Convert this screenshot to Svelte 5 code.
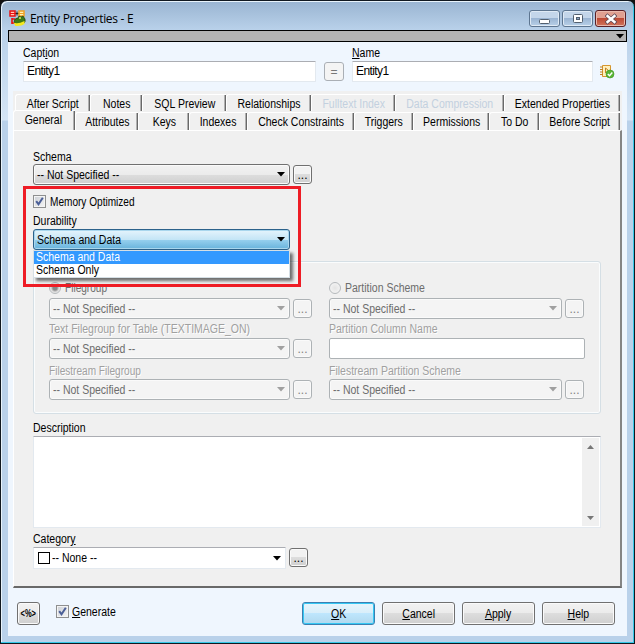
<script>
  let tabRows = $state([
    [
      { label: 'After Script', width: 75 },
      { label: 'Notes', width: 52 },
      { label: 'SQL Preview', width: 84 },
      { label: 'Relationships', width: 85 },
      { label: 'Fulltext Index', width: 84, disabled: true },
      { label: 'Data Compression', width: 109, disabled: true },
      { label: 'Extended Properties', width: 116 }
    ],
    [
      { label: 'General', width: 62, active: true },
      { label: 'Attributes', width: 63 },
      { label: 'Keys', width: 51 },
      { label: 'Indexes', width: 58 },
      { label: 'Check Constraints', width: 107 },
      { label: 'Triggers', width: 59 },
      { label: 'Permissions', width: 76 },
      { label: 'To Do', width: 50 },
      { label: 'Before Script', width: 81 }
    ]
  ]);

  let caption = $state('Entity1');
  let name = $state('Entity1');
  let durability = $state('Schema and Data');
  let memoryOptimized = $state(true);
  let generate = $state(true);

  const durabilityOptions = ['Schema and Data', 'Schema Only'];
  const actions = ['OK', 'Cancel', 'Apply', 'Help'];
</script>

{#snippet arrow()}
  <svg class="arrow" width="8" height="5" viewBox="0 0 8 5"><path d="M0 0h8L4 4.5z" fill="currentColor" /></svg>
{/snippet}

{#snippet combo(text, disabled)}
  <div class="line">
    <button class="combo" class:disabled><span class="t">{text}</span>{@render arrow()}</button>
    <button class="dots" class:disabled>...</button>
  </div>
{/snippet}

{#snippet checkbox(checked, toggle)}
  <button class="check" onclick={toggle} aria-label="toggle">
    {#if checked}
      <svg width="9" height="9" viewBox="0 0 9 9"><path d="M1.2 4.2l2.3 3L7.8.8" fill="none" stroke="#4b5f97" stroke-width="2" /></svg>
    {/if}
  </button>
{/snippet}

<div class="window">
  <header>
    <svg class="logo" width="17" height="17" viewBox="0 0 17 17">
      <path d="M6 3.500h4M8 1.500v4" stroke="#222" />
      <rect x="1" y="1" width="5" height="5" fill="#ffc8b8" stroke="#e81010" stroke-width="1.500" />
      <path d="M1 3.500h5" stroke="#e81010" />
      <rect x="10" y="1" width="5" height="5" fill="#fff2b8" stroke="#f0a020" stroke-width="1.500" />
      <path d="M10 3.500h5" stroke="#f0a020" />
      <path d="M3 8v6M3 9h3M3 13h3" fill="none" stroke="#e81010" stroke-width="1.600" />
      <path d="M5 11q1-3 4-3l1-2 2 1 2-1 2 3q1 3-2 5H6z" fill="#3c7a18" stroke="#1f3a08" stroke-width=".7" />
      <path d="M4.500 12.500q4 2 11-1.500v3q-3 2.500-9 2z" fill="#f4e820" />
      <circle cx="11" cy="8" r="1" fill="#d8f060" />
    </svg>
    <h1>Entity Properties - E</h1>
    <div class="controls">
      <button class="control" aria-label="Minimize">
        <svg width="12" height="12"><rect x=".5" y="6.500" width="10" height="4" rx="1" fill="#fff" stroke="#53606f" /></svg>
      </button>
      <button class="control" aria-label="Maximize">
        <svg width="12" height="12"><rect x="1.500" y="1.500" width="9" height="8" rx="1" fill="#fff" stroke="#53606f" /><rect x="4.500" y="4.500" width="3" height="2" fill="#8ba4c4" stroke="#53606f" /></svg>
      </button>
      <button class="control close" aria-label="Close">
        <svg width="12" height="12"><path d="M2.500 3l7 6M9.500 3l-7 6" stroke="#5f4a56" stroke-width="4" stroke-linecap="square" /><path d="M2.500 3l7 6M9.500 3l-7 6" stroke="#fff" stroke-width="2.400" stroke-linecap="square" /></svg>
      </button>
    </div>
  </header>

  <main>
    <div class="bar">{@render arrow()}</div>

    <div class="names">
      <label class="caption"><span class="t">Capt<u>i</u>on</span><input bind:value={caption} /></label>
      <button class="same">=</button>
      <label class="name"><span class="t"><u>N</u>ame</span><input bind:value={name} /></label>
      <svg class="note" width="15" height="15" viewBox="0 0 15 15">
        <path d="M2.500 1.500h8v11h-8z" fill="#fff0bd" stroke="#d6962f" />
        <path d="M0 3h3M0 5.500h3M0 8h3M0 10.500h3M5.500 9V4l3 2.500" fill="none" stroke="#c28223" />
        <circle cx="10" cy="10" r="4" fill="#5ab535" stroke="#3c9420" stroke-width=".6" />
        <path d="M7.800 10l1.700 1.700L12.300 8.500" fill="none" stroke="#fff" stroke-width="1.400" />
      </svg>
    </div>

    <div class="tabs">
      {#each tabRows as row, i}
        <nav class:second={i === 1}>
          {#each row as tab}
            <button
              class="tab"
              class:active={tab.active}
              class:off={tab.disabled}
              style="width: {tab.width}px"
            ><span class="t">{tab.label}</span></button>
          {/each}
        </nav>
      {/each}

      <section class="panel">
        <div class="label"><span class="t">Schema</span></div>
        <div class="schema">{@render combo('-- Not Specified --', false)}</div>

        <div class="memory">
          {@render checkbox(memoryOptimized, () => (memoryOptimized = !memoryOptimized))}
          <span class="t tight">Memory Optimized</span>
        </div>
        <div class="label durability"><span class="t">Durability</span></div>
        <div class="select">
          <button class="combo open"><span class="t">{durability}</span>{@render arrow()}</button>
          <ul>
            {#each durabilityOptions as option}
              <li class:selected={option === durability}>
                <button onclick={() => (durability = option)}><span class="t">{option}</span></button>
              </li>
            {/each}
          </ul>
          <div class="highlight"></div>
        </div>

        <div class="group">
          <div class="storage left">
            <div class="radio"><i class="on"></i><span class="t tight">Filegroup</span></div>
            {@render combo('-- Not Specified --', true)}
            <div class="label dim"><span class="t">Text Filegroup for Table (TEXTIMAGE_ON)</span></div>
            {@render combo('-- Not Specified --', true)}
            <div class="label dim last"><span class="t tight">Filestream Filegroup</span></div>
            {@render combo('-- Not Specified --', true)}
          </div>
          <div class="storage right">
            <div class="radio"><i></i><span class="t">Partition Scheme</span></div>
            {@render combo('-- Not Specified --', true)}
            <div class="label dim"><span class="t">Partition Column Name</span></div>
            <input class="column" disabled />
            <div class="label dim last"><span class="t">Filestream Partition Scheme</span></div>
            {@render combo('-- Not Specified --', true)}
          </div>
        </div>

        <div class="label description"><span class="t">Description</span></div>
        <div class="memo">
          <div class="scroll">
            <svg width="7" height="4"><path d="M0 4h7L3.500 0z" fill="#777" /></svg>
            <svg width="7" height="4"><path d="M0 0h7L3.500 4z" fill="#777" /></svg>
          </div>
        </div>

        <div class="label category"><span class="t">Categor<u>y</u></span></div>
        <div class="line">
          <button class="combo flat"><i class="swatch"></i><span class="t">-- None --</span>{@render arrow()}</button>
          <button class="dots">...</button>
        </div>
      </section>
    </div>

    <footer>
      <button class="code"><span class="t">&lt;%&gt;</span></button>
      <div class="generate">
        {@render checkbox(generate, () => (generate = !generate))}
        <span class="t"><u>G</u>enerate</span>
      </div>
      <div class="actions">
        {#each actions as action}
          <button class="action" class:primary={action === 'OK'}>
            <span class="t"><u>{action[0]}</u>{action.slice(1)}</span>
          </button>
        {/each}
      </div>
    </footer>
  </main>
</div>

<style>
  :global(body) {
    margin: 0;
    background: #111;
  }

  * {
    box-sizing: border-box;
  }

  .window {
    width: 635px;
    height: 644px;
    padding: 0 7px;
    border: 1px solid #101820;
    border-radius: 7px 7px 0 0;
    background: linear-gradient(#99b4d1, #b9d1ea 29px, #d5e5f5 119px, #b9d1ea 120px);
    box-shadow: inset -1px -1px #35c8e8, inset 1px 1px #e8f3fb;
    font: 12px 'Liberation Sans', sans-serif;
    color: #000;
  }

  button,
  input {
    font: inherit;
    color: inherit;
    padding: 0;
    margin: 0;
    display: block;
  }

  /* condensed UI lettering */
  .t {
    display: inline-block;
    white-space: pre;
    transform: scaleX(0.875);
    transform-origin: left;
  }

  .t.tight {
    transform: scaleX(0.84);
  }

  .tab .t,
  .action .t {
    transform-origin: center;
  }

  header {
    display: flex;
    height: 29px;
  }

  .logo {
    margin: 9px 0 0 1px;
  }

  h1 {
    margin: 9px 0 0 4px;
    font: 12px/18px 'Open Sans', sans-serif;
    letter-spacing: -0.3px;
  }

  .controls {
    display: flex;
    gap: 2px;
    margin: 9px 1px 0 auto;
  }

  .control {
    display: grid;
    place-items: center;
    width: 31px;
    height: 17px;
    border: 1px solid #5d7590;
    border-radius: 3px;
    background: linear-gradient(#c4d6ea 45%, #9bb5d3 50%, #b8d0e8);
    box-shadow: inset 0 0 0 1px #dfeaf5;
  }

  .close {
    border-color: #5a2026;
    background: linear-gradient(#e0a091 45%, #bd4a35 50%, #d0745c);
    box-shadow: inset 0 0 0 1px #e9b9ad;
  }

  main {
    height: 606px;
    background: #eff6fe;
  }

  .bar {
    display: flex;
    justify-content: flex-end;
    height: 12px;
    padding: 3px 2px 0 0;
    border: 1px solid #000;
    background: #b4b4b4;
  }

  .names {
    display: flex;
    height: 49px;
    padding: 4px 0 0 15px;
  }

  label .t {
    display: block;
    height: 15px;
    line-height: 15px;
  }

  input {
    height: 21px;
    padding: 0 3px 2px;
    border: 1px solid #e3e9ef;
    border-top-color: #abadb3;
    border-radius: 1px;
    background: #fff;
    outline: none;
    letter-spacing: -0.6px;
  }

  .caption input {
    width: 293px;
  }

  .name input {
    width: 241px;
  }

  .same {
    width: 20px;
    height: 19px;
    margin: 16px 8px 0;
    border: 1px solid #aaafb5;
    border-radius: 3px;
    background: #f4f4f4;
    color: #777;
  }

  .note {
    margin: 18px 0 0 7px;
  }

  .tabs {
    width: 609px;
    margin-left: 5px;
    background: #f0f0f0;
  }

  nav {
    display: flex;
    height: 20px;
    padding: 3px 0 0 2px;
  }

  nav.second {
    height: 19px;
    padding: 0;
  }

  .tab {
    height: 17px;
    border: solid #fff;
    border-width: 1px 0 0 1px;
    border-radius: 3px 0 0 0;
    background: #f0f0f0;
    box-shadow: inset -1px 0 #696969, inset -2px 0 #b0b0b0;
    line-height: 18px;
  }

  .second .tab {
    margin-top: 1px;
    height: 18px;
  }

  .second .active {
    margin-top: -1px;
    height: 20px;
    line-height: 17px;
    padding-right: 3px;
  }

  .off {
    color: #c3d0df;
  }

  .panel {
    height: 458px;
    padding: 19px 0 0 19px;
    border: solid;
    border-width: 1px 2px 2px 1px;
    border-color: #fff #858585 #696969 #fff;
  }

  .label {
    height: 14px;
    line-height: 14px;
  }

  .line {
    display: flex;
    gap: 3px;
  }

  .combo {
    display: flex;
    align-items: center;
    width: 257px;
    height: 21px;
    padding: 0 4px 0 3px;
    border: 1px solid #707070;
    border-radius: 3px;
    background: linear-gradient(#f2f2f2, #ebebeb 50%, #dddddd 50%, #cfcfcf);
    box-shadow: inset 0 0 0 1px #fafafa;
  }

  .arrow {
    margin-left: auto;
  }

  .dots {
    width: 19px;
    height: 19px;
    margin-top: 1px;
    border: 1px solid #707070;
    border-radius: 3px;
    background: linear-gradient(#f2f2f2 50%, #dddddd 50%, #cfcfcf);
    box-shadow: inset 0 0 0 1px #fafafa;
  }

  .combo.disabled,
  .dots.disabled {
    border-color: #adb2b5;
    background: #f4f4f4;
    color: #6d6d6d;
  }

  .dots.disabled {
    color: #838383;
  }

  .combo.disabled .arrow {
    color: #a0a0a0;
  }

  .memory {
    display: flex;
    gap: 4px;
    height: 14px;
    margin-top: 10px;
    line-height: 14px;
  }

  .check {
    display: grid;
    place-items: center;
    width: 13px;
    height: 13px;
    border: 1px solid #8e8f8f;
    background: linear-gradient(135deg, #cbcfd5, #f6f6f6);
    box-shadow: inset 0 0 0 1px #f4f4f4;
  }

  .durability {
    margin: 5px 0 1px;
  }

  .select {
    position: relative;
    height: 21px;
  }

  .combo.open {
    border-color: #2c628b;
    background: linear-gradient(#e5f4fc, #c4e5f6 50%, #98d1ef 50%, #68b3db);
    box-shadow: inset 0 0 0 1px #a9d6ed;
  }

  ul {
    position: absolute;
    z-index: 1;
    top: 21px;
    left: 0;
    width: 257px;
    margin: 0;
    padding: 0;
    border: 1px solid #d5dfe5;
    background: #fff;
    box-shadow: 3px 3px 3px rgba(0, 0, 0, 0.55);
    list-style: none;
  }

  li button {
    width: 100%;
    height: 13px;
    padding-left: 2px;
    border: 0;
    background: none;
    line-height: 13px;
    text-align: left;
  }

  .selected {
    background: #3399ff;
    color: #fff;
  }

  .highlight {
    position: absolute;
    z-index: 2;
    top: -43px;
    left: -10px;
    width: 278px;
    height: 101px;
    border: 3px solid #ee1c25;
    pointer-events: none;
  }

  .group {
    display: flex;
    width: 568px;
    height: 153px;
    margin-top: 11px;
    padding: 19px 0 0 15px;
    border: 1px solid #d5dfe5;
    border-radius: 3px;
    box-shadow: inset 0 0 0 1px #fafcfd;
  }

  .storage {
    flex: none;
    width: 280px;
  }

  .left .combo {
    width: 241px;
  }

  .right .combo {
    width: 233px;
  }

  .radio {
    display: flex;
    gap: 4px;
    height: 17px;
    color: #6d6d6d;
    line-height: 14px;
  }

  .radio i {
    width: 12px;
    height: 12px;
    margin-top: 1px;
    border: 1px solid #b5b9bc;
    border-radius: 50%;
    background: radial-gradient(#e4e4e4, #f8f8f8);
  }

  .radio .on {
    background: radial-gradient(#888 0 2px, #ddd 4px, #fff);
  }

  .dim {
    margin: 3px 0 2px;
    color: #a0a0a0;
    text-shadow: 1px 1px #fff;
  }

  .dim.last {
    margin-top: 5px;
    margin-bottom: 1px;
  }

  .column {
    width: 256px;
    border: 1px solid #adb2b5;
    border-radius: 2px;
  }

  .description {
    margin-top: 7px;
    margin-bottom: 1px;
  }

  .memo {
    display: flex;
    justify-content: flex-end;
    width: 568px;
    height: 92px;
    border: 1px solid #e3e9ef;
    border-top-color: #abadb3;
    background: #fff;
  }

  .scroll {
    display: flex;
    flex-direction: column;
    justify-content: space-between;
    align-items: center;
    width: 17px;
    height: 88px;
    margin: 1px;
    padding: 7px 0 6px;
    background: #f0f0f0;
  }

  .category {
    margin-top: 4px;
    margin-bottom: 1px;
  }

  .combo.flat {
    width: 253px;
    height: 22px;
    border: 1px solid #e3e9ef;
    border-top-color: #abadb3;
    border-radius: 1px;
    background: #fff;
    box-shadow: none;
  }

  .swatch {
    width: 12px;
    height: 12px;
    margin: 0 2px 0 1px;
    border: 1px solid #000;
  }

  footer {
    display: flex;
    padding: 14px 12px 0 9px;
  }

  .code,
  .action {
    height: 23px;
    border: 1px solid #707070;
    border-radius: 3px;
    background: linear-gradient(#f2f2f2, #ebebeb 50%, #dddddd 50%, #cfcfcf);
    box-shadow: inset 0 0 0 1px #fafafa;
  }

  .code {
    width: 23px;
    font-weight: bold;
    font-size: 10px;
  }

  .code .t {
    transform: scaleX(0.75);
    transform-origin: center;
  }

  .generate {
    display: flex;
    gap: 3px;
    margin: 3px 0 0 16px;
    line-height: 14px;
  }

  .actions {
    display: flex;
    gap: 7px;
    margin-left: auto;
  }

  .action {
    width: 73px;
  }

  .primary {
    border-color: #3c7fb1;
    background: linear-gradient(#e8f5fc, #d8eefa 50%, #bee6fd 50%, #b0d8ee);
    box-shadow: inset 0 0 0 1px #35c8f4;
  }
</style>
